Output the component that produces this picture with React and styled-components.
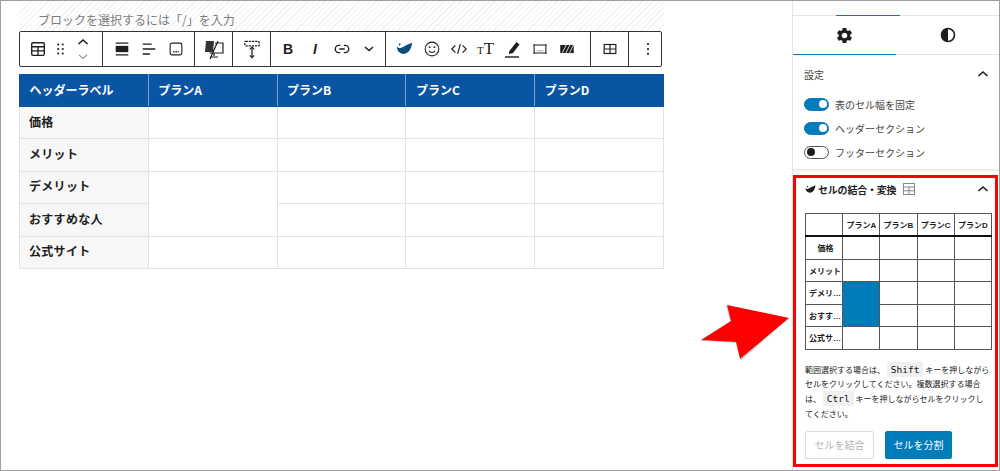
import styled, { createGlobalStyle } from "styled-components";
import { MdSettings } from "react-icons/md";

const GlobalStyle = createGlobalStyle`
  html, body {
    margin: 0;
    padding: 0;
    background: #fff;
  }
  body {
    font-family: "Noto Sans CJK JP", "Noto Sans", sans-serif;
    color: #1e1e1e;
  }
`;

const BLUE = "#007cba";

function Svg({ size = 18, w, h, vb = "0 0 20 20", children }) {
  return (
    <svg width={w || size} height={h || size} viewBox={vb} fill="none" stroke="#1e1e1e" strokeWidth="1.5">
      {children}
    </svg>
  );
}

const TableIcon = () => (
  <Svg>
    <rect x="3" y="3" width="14" height="14" rx="1.5" />
    <path d="M3 7.5h14M3 12h14M10 7.5V17" />
  </Svg>
);
const DragIcon = () => (
  <Svg>
    <g fill="#1e1e1e" stroke="none">
      <rect x="7" y="4" width="2" height="2" />
      <rect x="12" y="4" width="2" height="2" />
      <rect x="7" y="9" width="2" height="2" />
      <rect x="12" y="9" width="2" height="2" />
      <rect x="7" y="14" width="2" height="2" />
      <rect x="12" y="14" width="2" height="2" />
    </g>
  </Svg>
);
const MoverIcon = () => (
  <Svg w={18} h={24} vb="0 0 18 24">
    <path d="M4.5 7 9 3l4.5 4" strokeWidth="1.6" />
    <path d="M5 18l4 3.5 4-3.5" stroke="#999" strokeWidth="1.2" />
  </Svg>
);
const AlignFull = () => (
  <Svg>
    <path d="M3 3.5h14M3 16.5h14" />
    <rect x="3" y="6.5" width="14" height="7" fill="#1e1e1e" stroke="none" />
  </Svg>
);
const AlignLeft = () => (
  <Svg>
    <path d="M3 4.5h10M3 10h14M3 15.5h8" />
  </Svg>
);
const AlignBottom = () => (
  <Svg>
    <rect x="3.5" y="3.5" width="13" height="13" rx="2" strokeWidth="1.2" />
    <path d="M7 13h6" strokeDasharray="1.5 1" />
  </Svg>
);
const StackIcon = () => (
  <Svg w={22} h={22} vb="0 0 22 22">
    <path d="M3 3h8l-1 11H2z" fill="#333" stroke="none" />
    <path d="M12 5h8v10H6.500M11 15v3M7 19h8M15 3 7 21" strokeWidth="1.2" />
  </Svg>
);
const RollerIcon = () => (
  <Svg w={18} h={20} vb="0 0 20 22">
    <rect x="2" y="2.500" width="16" height="5" rx="1" strokeDasharray="2.500 1" strokeWidth="1.400" />
    <path d="M10 10v10" strokeWidth="1.400" />
    <path d="M7.500 11.500 10 9l2.500 2.500M7.500 18l2.500 2.500 2.500-2.500" strokeWidth="1.300" />
  </Svg>
);
const LinkIcon = () => (
  <Svg>
    <path d="M8 6H6.500a4 4 0 0 0 0 8H8M12 6h1.500a4 4 0 0 1 0 8H12M7 10h6" />
  </Svg>
);
const ChevronDown = () => (
  <Svg size={14} vb="0 0 14 14">
    <path d="M3 5l4 3.500L11 5" />
  </Svg>
);
const ChevronUp = () => (
  <Svg size={14} vb="0 0 14 14">
    <path d="M2.500 9 7 5l4.500 4" strokeWidth="1.600" />
  </Svg>
);
const Whale = ({ size = 16, color = "#0b4f7d" }) => (
  <svg width={size} height={size * 0.8} viewBox="0 0 20 16">
    <path
      fill={color}
      d="M1 5c1.500 2.500 4 2.500 6 1.500C10 5 13 3 19 1c-.5 6-4 13-10 13C4 14 1 10 1 5zM4 1.500c1 0 1.500 1 1.500 2L3.500 4c-.500-1-.500-2 .500-2.500z"
    />
  </svg>
);
const Smile = () => (
  <Svg>
    <circle cx="10" cy="10" r="7.600" strokeWidth="1.200" />
    <circle cx="7.300" cy="8" r="1" fill="#1e1e1e" stroke="none" />
    <circle cx="12.700" cy="8" r="1" fill="#1e1e1e" stroke="none" />
    <path d="M6.500 12c1.500 2.400 5.500 2.400 7 0" strokeWidth="1.200" />
  </Svg>
);
const CodeIcon = () => (
  <Svg>
    <path d="M6 6l-4 4 4 4M14 6l4 4-4 4M11.500 4.500l-3 11" strokeWidth="1.300" />
  </Svg>
);
const PenIcon = () => (
  <Svg w={18} h={20} vb="0 0 18 20">
    <path d="M5 12.500 12.500 3l3 2.500L9 14l-4 1z" fill="#1e1e1e" stroke="none" />
    <path d="M1 18h14" strokeWidth="1.400" />
  </Svg>
);
const RectIcon = () => (
  <Svg>
    <path d="M3.500 5v10M16.500 5v10" strokeWidth="1.200" />
    <path d="M2.500 5.500h15M2.500 14.500h15" strokeWidth="1.200" />
    <path d="M6 12h8" strokeWidth="0.800" stroke="#888" />
  </Svg>
);
const HatchIcon = () => (
  <Svg>
    <rect x="2.500" y="5.500" width="15" height="9" fill="#1e1e1e" stroke="none" />
    <path d="M4 16l6-12M8 16l6-12M12 16l6-12" stroke="#fff" strokeWidth="0.900" />
  </Svg>
);
const CellsIcon = () => (
  <Svg>
    <rect x="3.500" y="5" width="13" height="10" strokeWidth="1.300" />
    <path d="M3.500 10h13M10 5v10" strokeWidth="1.300" />
  </Svg>
);
const MoreIcon = () => (
  <Svg>
    <g fill="#1e1e1e" stroke="none">
      <rect x="9" y="3.500" width="2" height="2" />
      <rect x="9" y="9" width="2" height="2" />
      <rect x="9" y="14.500" width="2" height="2" />
    </g>
  </Svg>
);
const Contrast = () => (
  <svg width="16" height="16" viewBox="0 0 16 16">
    <circle cx="8" cy="8" r="6.500" fill="none" stroke="#1e1e1e" strokeWidth="1.600" />
    <path d="M8 1.500a6.500 6.500 0 0 0 0 13z" fill="#1e1e1e" />
  </svg>
);

const HEAD = ["プランA", "プランB", "プランC", "プランD"];

export default function App() {
  return (
    <Frame>
      <GlobalStyle />
      <Editor>
        <Placeholder>ブロックを選択するには「/」を入力</Placeholder>
        <Toolbar>
          <Group $pad="0 7px">
            <Slot $w={22}><TableIcon /></Slot>
            <Slot $w={22}><DragIcon /></Slot>
            <Slot $w={24}><MoverIcon /></Slot>
          </Group>
          <Group>
            <Slot><AlignFull /></Slot>
            <Slot><AlignLeft /></Slot>
            <Slot><AlignBottom /></Slot>
          </Group>
          <Group>
            <Slot><StackIcon /></Slot>
          </Group>
          <Group>
            <Slot><RollerIcon /></Slot>
          </Group>
          <Group $pad="0 2.500px 0 3.500px">
            <Slot><BoldMark>B</BoldMark></Slot>
            <Slot><ItalicMark>I</ItalicMark></Slot>
            <Slot><LinkIcon /></Slot>
            <Slot><ChevronDown /></Slot>
          </Group>
          <Group $pad="0 10px 0 5px">
            <Slot><Whale size={17} /></Slot>
            <Slot><Smile /></Slot>
            <Slot><CodeIcon /></Slot>
            <Slot><SizeMark><small>T</small>T</SizeMark></Slot>
            <Slot><PenIcon /></Slot>
            <Slot><RectIcon /></Slot>
            <Slot><HatchIcon /></Slot>
          </Group>
          <Group>
            <Slot><CellsIcon /></Slot>
          </Group>
          <Group $last>
            <Slot><MoreIcon /></Slot>
          </Group>
        </Toolbar>
        <MainTable>
          <thead>
            <tr>
              <HeadCell>ヘッダーラベル</HeadCell>
              {HEAD.map((h) => (
                <HeadCell key={h}>{h}</HeadCell>
              ))}
            </tr>
          </thead>
          <tbody>
            <tr>
              <RowHead>価格</RowHead>
              <Cell /><Cell /><Cell /><Cell />
            </tr>
            <tr>
              <RowHead>メリット</RowHead>
              <Cell /><Cell /><Cell /><Cell />
            </tr>
            <tr>
              <RowHead>デメリット</RowHead>
              <Cell rowSpan={2} /><Cell /><Cell /><Cell />
            </tr>
            <tr>
              <RowHead>おすすめな人</RowHead>
              <Cell /><Cell /><Cell />
            </tr>
            <tr>
              <RowHead>公式サイト</RowHead>
              <Cell /><Cell /><Cell /><Cell />
            </tr>
          </tbody>
        </MainTable>
      </Editor>

      <Sidebar>
        <TopTabs>
          <TopTabLine />
        </TopTabs>
        <IconTabs>
          <IconTab $active><MdSettings size={19} color="#1e1e1e" /></IconTab>
          <IconTab><Contrast /></IconTab>
        </IconTabs>

        <Panel>
          <PanelTitle>
            <span>設定</span>
            <ChevronUp />
          </PanelTitle>
          <ToggleRow><Toggle $on /><span>表のセル幅を固定</span></ToggleRow>
          <ToggleRow><Toggle $on /><span>ヘッダーセクション</span></ToggleRow>
          <ToggleRow><Toggle /><span>フッターセクション</span></ToggleRow>
        </Panel>

        <RedPanel>
          <MergeTitle>
            <Whale size={11} color="#1e1e1e" />
            <strong>セルの結合・変換</strong>
            <svg width="14" height="14" viewBox="0 0 14 14" fill="none" stroke="#888" strokeWidth="1">
              <rect x="1.500" y="1.500" width="11" height="11" />
              <path d="M1.500 5h11M1.500 8.800h11M7 5v7.500" />
            </svg>
            <TitleChevron><ChevronUp /></TitleChevron>
          </MergeTitle>

          <MiniTable>
            <thead>
              <tr>
                <MiniHead />
                {HEAD.map((h) => (
                  <MiniHead key={h}>{h}</MiniHead>
                ))}
              </tr>
            </thead>
            <tbody>
              <tr>
                <MiniRowHead $center>価格</MiniRowHead>
                <MiniCell /><MiniCell /><MiniCell /><MiniCell />
              </tr>
              <tr>
                <MiniRowHead>メリット</MiniRowHead>
                <MiniCell /><MiniCell /><MiniCell /><MiniCell />
              </tr>
              <tr>
                <MiniRowHead>デメリット</MiniRowHead>
                <MiniCell rowSpan={2} $selected /><MiniCell /><MiniCell /><MiniCell />
              </tr>
              <tr>
                <MiniRowHead>おすすめな人</MiniRowHead>
                <MiniCell /><MiniCell /><MiniCell />
              </tr>
              <tr>
                <MiniRowHead>公式サイト</MiniRowHead>
                <MiniCell /><MiniCell /><MiniCell /><MiniCell />
              </tr>
            </tbody>
          </MiniTable>

          <Hint>
            範囲選択する場合は、 <Key>Shift</Key> キーを押しながらセルをクリックしてください。複数選択する場合は、 <Key>Ctrl</Key> キーを押しながらセルをクリックしてください。
          </Hint>

          <Buttons>
            <GhostButton disabled>セルを結合</GhostButton>
            <PrimaryButton>セルを分割</PrimaryButton>
          </Buttons>
        </RedPanel>
      </Sidebar>

      <Arrow width="92" height="58" viewBox="0 0 92 58">
        <polygon points="26,2 88,15 41,57 37,39 0,37 30,18" fill="#b9dbe6" />
        <polygon points="27,1 89,14 40,55 36,38 1,36 31,17" fill="#ff0000" />
      </Arrow>
    </Frame>
  );
}

const Frame = styled.div`
  position: relative;
  box-sizing: border-box;
  display: flex;
  width: 1000px;
  height: 471px;
  border: 1px solid #a0a0a0;
  overflow: hidden;
  background: #fff;
`;

const Editor = styled.main`
  flex: 1;
  min-width: 0;
  padding-left: 18px;
`;

const Placeholder = styled.div`
  box-sizing: border-box;
  width: 645px;
  height: 30px;
  padding: 8px 0 0 19px;
  font-size: 12px;
  line-height: 22px;
  color: #7c7c7c;
  background: repeating-linear-gradient(-45deg, #f1f1f1 0 1px, #fff 1px 4px);
`;

const Toolbar = styled.div`
  box-sizing: border-box;
  display: flex;
  width: 643px;
  height: 36px;
  border: 1px solid #333;
  border-radius: 2px;
  background: #fff;
`;

const Group = styled.div`
  display: flex;
  align-items: center;
  padding: ${({ $pad }) => $pad || "0 5px"};
  border-right: ${({ $last }) => ($last ? "0" : "1px solid #333")};
`;

const Slot = styled.div`
  display: flex;
  align-items: center;
  justify-content: center;
  width: ${({ $w }) => $w || 27}px;
  height: 34px;
`;

const BoldMark = styled.span`
  font: 700 14px "Liberation Sans", sans-serif;
`;

const ItalicMark = styled.span`
  font: italic 700 14px "Liberation Sans", sans-serif;
`;

const SizeMark = styled.span`
  font: 400 17px "Liberation Serif", serif;
  small {
    font-size: 11px;
  }
`;

const MainTable = styled.table`
  width: 645px;
  margin-top: 7px;
  border-collapse: collapse;
  table-layout: fixed;
  font-size: 12px;
`;

const HeadCell = styled.th`
  height: 29px;
  padding: 0 0 2px 9.500px;
  text-align: left;
  font-weight: 700;
  color: #fff;
  background: #0a55a3;
  border: 1px solid #7e9fca;
  border-top-color: #0a55a3;
  border-bottom-color: #0a55a3;
  &:first-child {
    border-left-color: #0a55a3;
  }
  &:last-child {
    border-right-color: #0a55a3;
  }
`;

const RowHead = styled.th`
  height: 28.400px;
  padding: 0 0 3px 9px;
  text-align: left;
  font-weight: 700;
  letter-spacing: 0.300px;
  background: #f7f7f7;
  border: 1px solid #e3e3e3;
`;

const Cell = styled.td`
  border: 1px solid #e3e3e3;
`;

const Sidebar = styled.aside`
  box-sizing: border-box;
  width: 207px;
  flex: none;
  border-left: 1px solid #e4e4e4;
`;

const TopTabs = styled.div`
  position: relative;
  height: 14px;
  border-bottom: 1px solid #e4e4e4;
`;

const TopTabLine = styled.div`
  position: absolute;
  left: 43px;
  bottom: -1px;
  width: 64px;
  height: 1px;
  background: ${BLUE};
`;

const IconTabs = styled.div`
  display: flex;
  height: 38px;
  border-bottom: 1px solid #e4e4e4;
`;

const IconTab = styled.div`
  display: flex;
  align-items: center;
  justify-content: center;
  flex: 1;
  margin-bottom: -1px;
  border-bottom: 1px solid ${({ $active }) => ($active ? BLUE : "transparent")};
`;

const Panel = styled.section`
  padding: 9px 9px 5px 11px;
  border-bottom: 2px solid #eee;
`;

const PanelTitle = styled.div`
  display: flex;
  align-items: center;
  justify-content: space-between;
  height: 20px;
  margin-bottom: 8px;
  font-size: 10px;
  color: #444;
`;

const ToggleRow = styled.div`
  display: flex;
  align-items: center;
  gap: 6px;
  height: 24px;
  font-size: 10px;
  color: #444;
`;

const Toggle = styled.span`
  position: relative;
  box-sizing: border-box;
  display: block;
  width: 25px;
  height: 13px;
  border-radius: 7px;
  border: 1px solid ${({ $on }) => ($on ? BLUE : "#555")};
  background: ${({ $on }) => ($on ? BLUE : "#fff")};
  &::after {
    content: "";
    position: absolute;
    top: 1.500px;
    left: ${({ $on }) => ($on ? "13.500px" : "1.500px")};
    width: 8px;
    height: 8px;
    border-radius: 50%;
    background: ${({ $on }) => ($on ? "#fff" : "#1e1e1e")};
  }
`;

const RedPanel = styled.section`
  box-sizing: border-box;
  height: 292px;
  margin: 4px 1px 0 0;
  padding: 1px 3px 0 9px;
  border: 3px solid #ff0000;
`;

const MergeTitle = styled.div`
  display: flex;
  align-items: center;
  gap: 2px;
  height: 20px;
  font-size: 10px;
  strong {
    font-weight: 700;
    letter-spacing: -0.200px;
    margin-right: 4px;
  }
`;

const TitleChevron = styled.span`
  display: flex;
  margin-left: auto;
  padding-right: 2px;
`;

const MiniTable = styled.table`
  width: 187px;
  margin-top: 14px;
  border-collapse: collapse;
  table-layout: fixed;
  font-family: "Liberation Sans", "Noto Sans CJK JP", sans-serif;
  font-size: 8px;
  font-weight: 700;
`;

const MiniHead = styled.th`
  height: 21px;
  padding: 0;
  text-align: center;
  font-size: 8px;
  border: 1px solid #555;
  border-bottom: 2px solid #111;
`;

const MiniRowHead = styled.td`
  height: 21.500px;
  max-width: 37px;
  padding: 0 0 0 3px;
  overflow: hidden;
  white-space: nowrap;
  text-overflow: ellipsis;
  text-align: ${({ $center }) => ($center ? "center" : "left")};
  border: 1px solid #555;
`;

const MiniCell = styled.td`
  background: ${({ $selected }) => ($selected ? BLUE : "#fff")};
  border: 1px solid #555;
`;

const Hint = styled.p`
  margin: 13px 1px 0 0;
  font-size: 8px;
  line-height: 14.800px;
  color: #222;
`;

const Key = styled.code`
  padding: 2px 4px;
  font-family: "DejaVu Sans Mono", monospace;
  font-size: 9.500px;
  color: #111;
  background: #f0f0f0;
`;

const Buttons = styled.div`
  display: flex;
  gap: 11px;
  margin-top: 9px;
`;

const GhostButton = styled.button`
  box-sizing: border-box;
  width: 69px;
  height: 28px;
  padding: 0;
  font-family: inherit;
  font-size: 10px;
  color: #b5b5b5;
  background: #fff;
  border: 1px solid #ddd;
  border-radius: 2px;
`;

const PrimaryButton = styled(GhostButton)`
  width: 67px;
  color: #fff;
  background: ${BLUE};
  border-color: ${BLUE};
`;

const Arrow = styled.svg`
  position: absolute;
  left: 699px;
  top: 303px;
`;
